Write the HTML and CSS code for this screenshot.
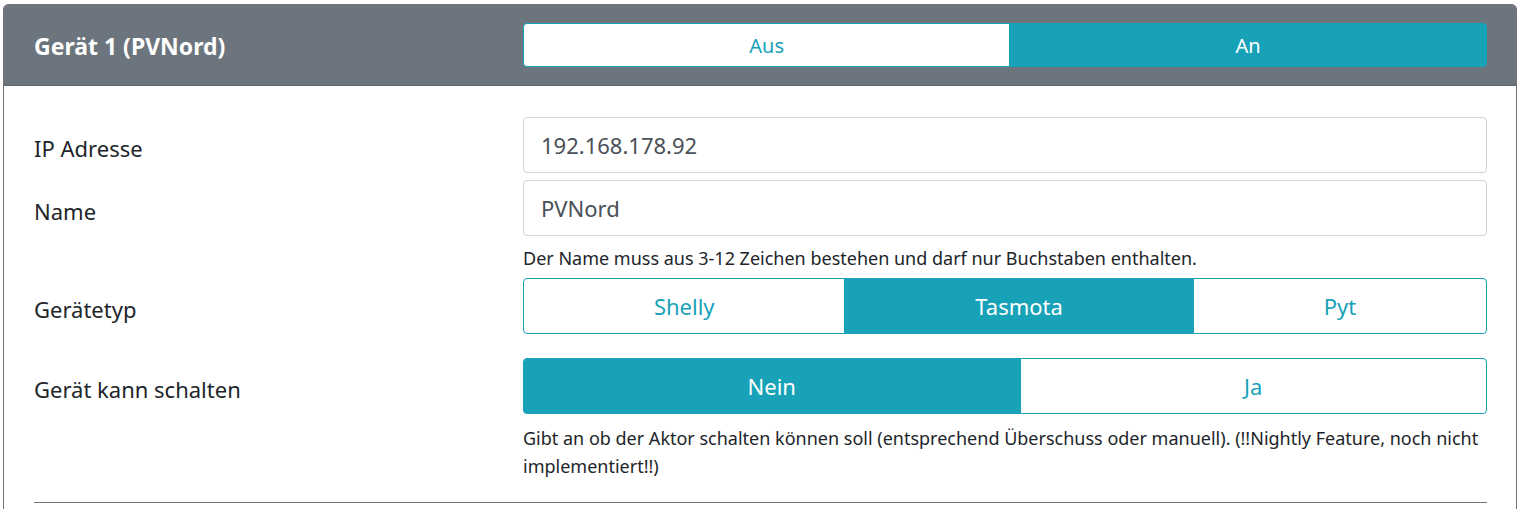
FILE: index.html
```html
<!DOCTYPE html>
<html lang="de">
<head>
<meta charset="utf-8">
<title>Gerät 1</title>
<link rel="stylesheet" href="styles.css">
</head>
<body>
<div class="card">
  <div class="card-header">
    <div class="title">Gerät 1 (PVNord)</div>
    <div class="btn-group small-group">
      <button class="btn">Aus</button>
      <button class="btn active">An</button>
    </div>
  </div>
  <div class="card-body">
    <div class="row">
      <label class="label">IP Adresse</label>
      <div class="control"><div class="input">192.168.178.92</div></div>
    </div>
    <div class="row tight">
      <label class="label">Name</label>
      <div class="control">
        <div class="input">PVNord</div>
        <div class="help">Der Name muss aus 3-12 Zeichen bestehen und darf nur Buchstaben enthalten.</div>
      </div>
    </div>
    <div class="row">
      <label class="label">Gerätetyp</label>
      <div class="control">
        <div class="btn-group">
          <button class="btn">Shelly</button>
          <button class="btn active">Tasmota</button>
          <button class="btn">Pyt</button>
        </div>
      </div>
    </div>
    <div class="row gap">
      <label class="label">Gerät kann schalten</label>
      <div class="control">
        <div class="btn-group">
          <button class="btn active">Nein</button>
          <button class="btn">Ja</button>
        </div>
        <div class="help two">Gibt an ob der Aktor schalten können soll (entsprechend Überschuss oder manuell). (!!Nightly Feature, noch nicht implementiert!!)</div>
      </div>
    </div>
    <hr class="sep">
  </div>
</div>
</body>
</html>
```

FILE: styles.css
```css
html, body {
  margin: 0;
  padding: 0;
  background: #fff;
}
body {
  padding: 4px 9px 0 3px;
  font-family: "Noto Sans", "Open Sans", sans-serif;
  color: #212529;
}
.card {
  border: 1px solid #6c757d;
  border-radius: 5px;
  overflow: hidden;
  height: 600px;
}
.card-header {
  background: #6c757d;
  display: grid;
  grid-template-columns: 489px 1fr;
  align-items: center;
  padding: 18px 29px 18px 30px;
  border-bottom: 1px solid #5f676e;
}
.title {
  color: #fff;
  font-weight: bold;
  font-size: 23px;
  padding-top: 2px;
}
.btn-group {
  display: flex;
  height: 56px;
}
.small-group {
  height: 44px;
}
.btn {
  flex: 1 1 auto;
  font-family: inherit;
  font-size: 22px;
  color: #17a2b8;
  background: #fff;
  border: 1px solid #17a2b8;
  padding: 0 20px;
  margin: 0;
  margin-left: -1px;
  border-radius: 0;
}
.btn:first-child {
  margin-left: 0;
  border-radius: 4px 0 0 4px;
}
.btn:last-child {
  border-radius: 0 4px 4px 0;
}
.btn.active {
  background: #17a2b8;
  color: #fff;
}
.small-group .btn {
  font-size: 20px;
}
.card-body {
  padding: 31px 29px 0 30px;
}
.row {
  display: grid;
  grid-template-columns: 489px 1fr;
  align-items: start;
}
.row.tight {
  margin-top: 7px;
}
.row.gap {
  margin-top: 24px;
}
.label {
  box-sizing: border-box;
  height: 56px;
  font-size: 22px;
  line-height: 56px;
  padding-top: 3px;
}
.input {
  box-sizing: border-box;
  height: 56px;
  border: 1px solid #ced4da;
  border-radius: 4px;
  padding: 0 17px;
  font-size: 22px;
  line-height: 54px;
  color: #495057;
}
.help {
  font-size: 18px;
  line-height: 28px;
  margin-top: 8px;
  margin-bottom: 6px;
}
.help.two {
  margin-top: 10px;
  margin-bottom: 0;
}
.sep {
  border: 0;
  border-top: 1px solid #6c757d;
  margin: 22px 0 0 0;
}
```
